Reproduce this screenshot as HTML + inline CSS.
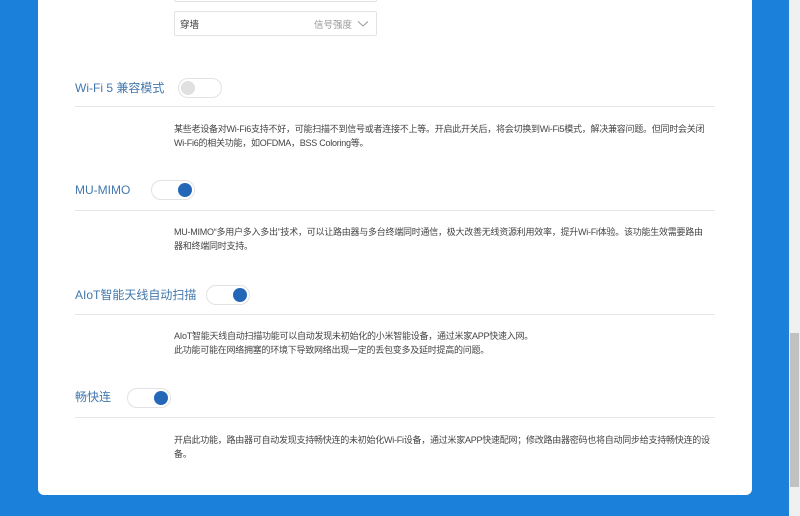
<!DOCTYPE html>
<html><head><meta charset="utf-8"><style>
*{margin:0;padding:0;box-sizing:border-box}
body{width:800px;height:516px;overflow:hidden;background:#1a80d9;position:relative;font-family:"Liberation Sans","Noto Sans CJK SC",sans-serif}
.panel{position:absolute;left:38px;top:-10px;width:714px;height:505px;background:#fff;border-radius:0 0 6px 6px}
.sb{position:absolute;left:789px;top:0;width:11px;height:516px;background:#f0f0f0}
.thumb{position:absolute;left:1px;top:333px;width:9px;height:154px;background:#c1c1c1}
.a{position:absolute;white-space:nowrap}
.box{position:absolute;border:1px solid #e3e3e3;border-radius:2px;background:#fff}
.title{position:absolute;font-size:12px;color:#4277ad;line-height:16px;white-space:nowrap}
.tg{position:absolute;width:44px;height:20px;border:1px solid #e2e2e2;border-radius:10px;background:#fff}
.tg i{position:absolute;top:2px;width:14px;height:14px;border-radius:50%}
.on i{right:2px;background:#2467b8}
.off i{left:2px;background:#e0e0e0}
.line{position:absolute;left:75px;width:640px;height:1px;background:#e6e6e6}
.d{position:absolute;left:174px;font-size:9px;color:#444;line-height:14px;white-space:nowrap;letter-spacing:-0.25px}
</style></head><body>
<div class="panel"></div>
<div class="box" style="left:174px;top:-10px;width:203px;height:12px"></div>
<div class="box" style="left:174px;top:11px;width:203px;height:25px"></div>
<div class="a" style="left:180px;top:17px;font-size:9.5px;color:#333">穿墙</div>
<div class="a" style="left:314px;top:17px;font-size:9.5px;color:#999">信号强度</div>
<svg class="a" style="left:357px;top:20px" width="12" height="8"><path d="M1 1.5 L6 6 L11 1.5" fill="none" stroke="#999" stroke-width="1"/></svg>

<div class="title" style="left:75px;top:80px">Wi-Fi 5 兼容模式</div>
<div class="tg off" style="left:178px;top:78px"><i></i></div>
<div class="line" style="top:106px"></div>
<div class="d" style="top:122px">某些老设备对Wi-Fi6支持不好，可能扫描不到信号或者连接不上等。开启此开关后，将会切换到Wi-Fi5模式，解决兼容问题。但同时会关闭<br>Wi-Fi6的相关功能，如OFDMA，BSS Coloring等。</div>

<div class="title" style="left:75px;top:182px">MU-MIMO</div>
<div class="tg on" style="left:151px;top:180px"><i></i></div>
<div class="line" style="top:210px"></div>
<div class="d" style="top:225px">MU-MIMO“多用户多入多出”技术，可以让路由器与多台终端同时通信，极大改善无线资源利用效率，提升Wi-Fi体验。该功能生效需要路由<br>器和终端同时支持。</div>

<div class="title" style="left:75px;top:287px">AIoT智能天线自动扫描</div>
<div class="tg on" style="left:206px;top:285px"><i></i></div>
<div class="line" style="top:314px"></div>
<div class="d" style="top:329px">AIoT智能天线自动扫描功能可以自动发现未初始化的小米智能设备，通过米家APP快速入网。<br>此功能可能在网络拥塞的环境下导致网络出现一定的丢包变多及延时提高的问题。</div>

<div class="title" style="left:75px;top:389px">畅快连</div>
<div class="tg on" style="left:127px;top:388px"><i></i></div>
<div class="line" style="top:417px"></div>
<div class="d" style="top:433px">开启此功能，路由器可自动发现支持畅快连的未初始化Wi-Fi设备，通过米家APP快速配网；修改路由器密码也将自动同步给支持畅快连的设<br>备。</div>

<div class="sb"><div class="thumb"></div></div>
</body></html>
